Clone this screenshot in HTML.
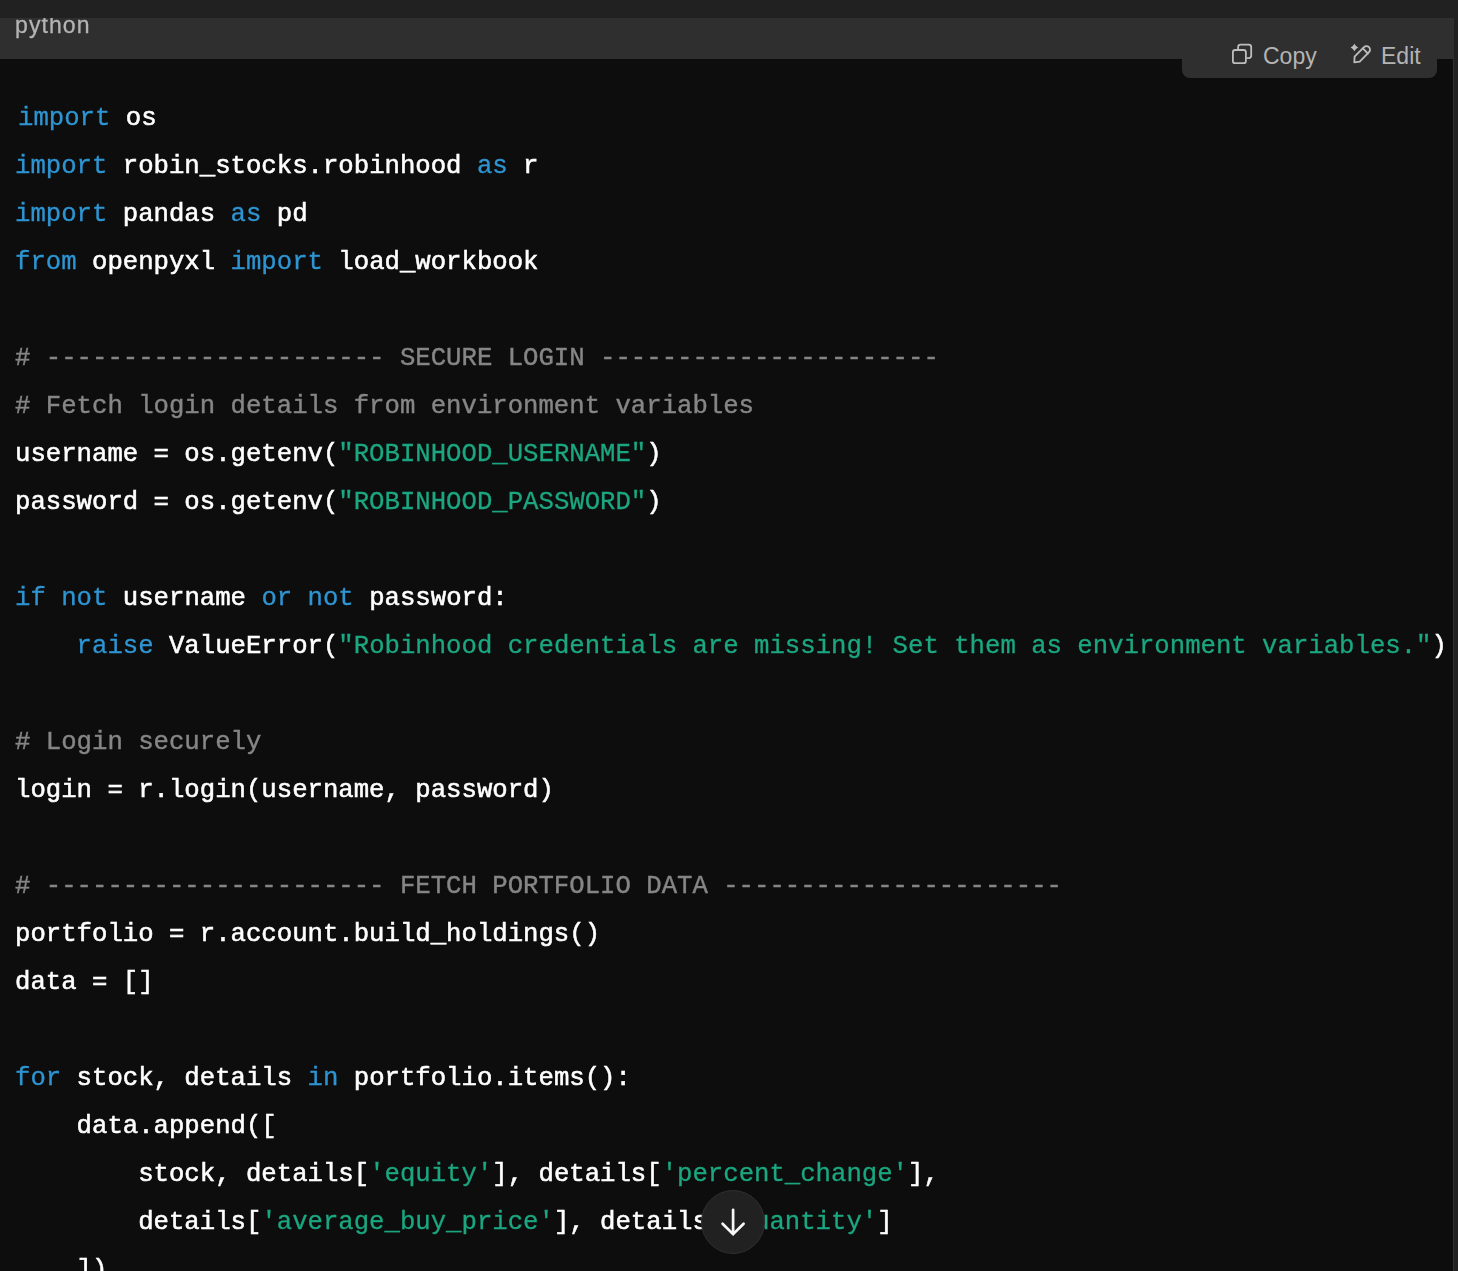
<!DOCTYPE html>
<html lang="en">
<head>
<meta charset="utf-8">
<title>python code block</title>
<style>
*{box-sizing:border-box;}
html,body{margin:0;padding:0;}
body{width:1458px;height:1271px;overflow:hidden;background:#212121;position:relative;font-family:"Liberation Sans",sans-serif;-webkit-font-smoothing:antialiased;}
.block{position:absolute;left:0;top:18px;width:1454px;height:1253px;background:#0d0d0d;border-right:1px solid #303030;overflow:hidden;}
.head{position:absolute;left:0;top:0;width:1453px;height:41px;background:#2f2f2f;overflow:hidden;}
.lang{position:absolute;left:15.45px;top:-8px;font-size:23px;letter-spacing:1.1px;-webkit-text-stroke:0.3px;line-height:30px;color:#b4b4b4;white-space:nowrap;will-change:transform;}
.tools{position:absolute;left:1182px;top:0;width:255px;height:60px;background:#2f2f2f;border-radius:0 0 8px 8px;color:#b4b4b4;font-size:23px;}
.tools .t{position:absolute;top:23px;line-height:30px;white-space:nowrap;}
.ico{position:absolute;left:1182px;top:0;overflow:visible;}
.code{position:absolute;left:15.2px;top:95px;margin:0;font-family:"Liberation Mono", "DejaVu Sans Mono", monospace;font-size:25.665px;letter-spacing:0px;color:#fff;white-space:normal;-webkit-text-stroke:0.55px;will-change:transform;}
.ln{height:48px;line-height:48px;white-space:pre;}
.ln.first{position:relative;left:3px;}
.k{color:#2e95d3;-webkit-text-stroke-width:0.3px;}
.s{color:#1ba780;-webkit-text-stroke-width:0.3px;}
.c{color:#868686;-webkit-text-stroke-width:0.4px;}
.fab{position:absolute;left:698px;top:1187px;}
</style>
</head>
<body>
<div class="block">
  <div class="head"><div class="lang">python</div></div>
  <div class="tools">
    <div class="t" style="left:81px">Copy</div>
    <div class="t" style="left:199px">Edit</div>
  </div>
  <svg class="ico" width="272" height="60" viewBox="1182 18 272 60" fill="none" stroke="#bdbdbd" stroke-width="1.8" stroke-linecap="round" stroke-linejoin="round">
    <path d="M1238.1 49.3V47.2a2.5 2.5 0 0 1 2.5-2.5h8.1a2.5 2.5 0 0 1 2.5 2.5v8.4a2.5 2.5 0 0 1-2.5 2.5H1247.2"/>
    <rect x="1232.9" y="50" width="13" height="13.2" rx="2.3"/>
    <path d="M1354.58 56.72L1363.99 47.19A3.55 3.55 0 0 1 1369.01 52.21L1359.7 61.65L1354.3 62.3Z"/>
    <path d="M1362.83 48.47L1367.87 53.5"/>
    <path d="M1354.4 43.65Q1355.64 46.21 1358.2 47.45Q1355.64 48.69 1354.4 51.25Q1353.16 48.69 1350.6 47.45Q1353.16 46.21 1354.4 43.65Z" fill="#bdbdbd" stroke="none"/>
  </svg>
</div>
<div class="code">
<div class="ln first"><span class="k">import</span> os</div>
<div class="ln"><span class="k">import</span> robin_stocks.robinhood <span class="k">as</span> r</div>
<div class="ln"><span class="k">import</span> pandas <span class="k">as</span> pd</div>
<div class="ln"><span class="k">from</span> openpyxl <span class="k">import</span> load_workbook</div>
<div class="ln">&nbsp;</div>
<div class="ln"><span class="c"># ---------------------- SECURE LOGIN ----------------------</span></div>
<div class="ln"><span class="c"># Fetch login details from environment variables</span></div>
<div class="ln">username = os.getenv(<span class="s">"ROBINHOOD_USERNAME"</span>)</div>
<div class="ln">password = os.getenv(<span class="s">"ROBINHOOD_PASSWORD"</span>)</div>
<div class="ln">&nbsp;</div>
<div class="ln"><span class="k">if</span> <span class="k">not</span> username <span class="k">or</span> <span class="k">not</span> password:</div>
<div class="ln">    <span class="k">raise</span> ValueError(<span class="s">"Robinhood credentials are missing! Set them as environment variables."</span>)</div>
<div class="ln">&nbsp;</div>
<div class="ln"><span class="c"># Login securely</span></div>
<div class="ln">login = r.login(username, password)</div>
<div class="ln">&nbsp;</div>
<div class="ln"><span class="c"># ---------------------- FETCH PORTFOLIO DATA ----------------------</span></div>
<div class="ln">portfolio = r.account.build_holdings()</div>
<div class="ln">data = []</div>
<div class="ln">&nbsp;</div>
<div class="ln"><span class="k">for</span> stock, details <span class="k">in</span> portfolio.items():</div>
<div class="ln">    data.append([</div>
<div class="ln">        stock, details[<span class="s">'equity'</span>], details[<span class="s">'percent_change'</span>],</div>
<div class="ln">        details[<span class="s">'average_buy_price'</span>], details[<span class="s">'quantity'</span>]</div>
<div class="ln">    ])</div>
</div>
<svg class="fab" width="70" height="70" viewBox="698 1187 70 70" fill="none">
  <ellipse cx="733" cy="1222" rx="31.5" ry="31.5" fill="#212121" stroke="#303030" stroke-width="1"/>
  <path d="M733.1 1209.8V1233.2M722.6 1223.8L733.1 1234.2L743.6 1223.8" stroke="#f7f7f7" stroke-width="2.7" stroke-linecap="round" stroke-linejoin="miter"/>
</svg>
</body>
</html>
